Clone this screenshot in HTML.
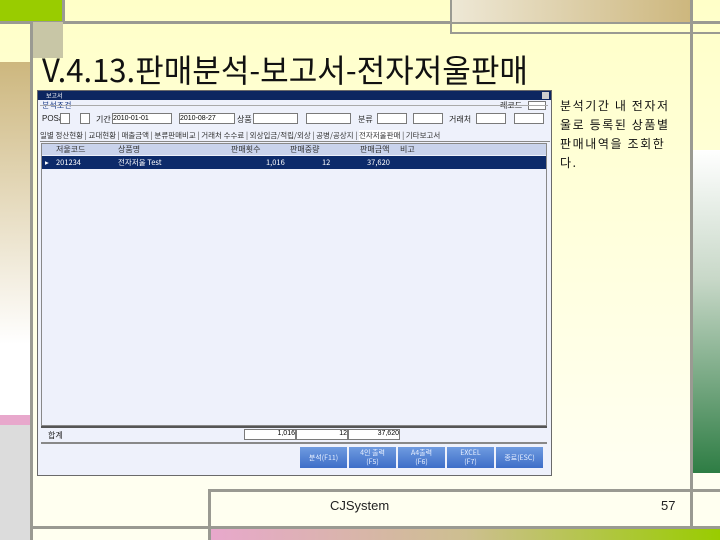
<!DOCTYPE html>
<html><head><meta charset="utf-8"><style>
*{margin:0;padding:0;box-sizing:border-box}
body{width:720px;height:540px;position:relative;overflow:hidden;background:linear-gradient(#ffffc8,#fffff0 85%);font-family:"Liberation Sans","Noto Sans CJK KR",sans-serif}
.a{position:absolute}
.k{font-family:"Noto Sans CJK KR","Liberation Sans",sans-serif}
.w{font-size:8px;color:#222}
.inp{position:absolute;background:#fff;border:1px solid #7a7a7a;height:11px}
.btn{position:absolute;top:447px;width:47px;height:21px;background:linear-gradient(#6f9be0,#3d6ec8);color:#e8f0ff;font-size:7px;text-align:center;line-height:9px;padding-top:2px}
</style></head><body>
<div class="a" style="left:0;top:0;width:62px;height:22px;background:#99cc00"></div>
<div class="a" style="left:62px;top:0;width:3px;height:22px;background:#9a9a92"></div>
<div class="a" style="left:0;top:21px;width:720px;height:3px;background:#9a9a92"></div>
<div class="a" style="left:33px;top:22px;width:30px;height:36px;background:#c8c6a6"></div>
<div class="a" style="left:0;top:62px;width:30px;height:353px;background:linear-gradient(#cdb77e,#fff 80%)"></div>
<div class="a" style="left:0;top:415px;width:30px;height:10px;background:#e8a8cc"></div>
<div class="a" style="left:0;top:425px;width:30px;height:115px;background:#dcdcdc"></div>
<div class="a" style="left:30px;top:22px;width:3px;height:518px;background:#9a9a92"></div>
<div class="a" style="left:450px;top:0;width:240px;height:22px;background:linear-gradient(90deg,#eee8d6,#cdb77e)"></div>
<div class="a" style="left:450px;top:0;width:2px;height:34px;background:#9a9a92"></div>
<div class="a" style="left:450px;top:32px;width:270px;height:2px;background:#9a9a92"></div>
<div class="a" style="left:690px;top:0;width:3px;height:540px;background:#9a9a92"></div>
<div class="a" style="left:693px;top:150px;width:27px;height:323px;background:linear-gradient(#fff,#c8d8c8 40%,#2e7d44)"></div>
<div class="a" style="left:208px;top:489px;width:512px;height:3px;background:#9a9a92"></div>
<div class="a" style="left:208px;top:489px;width:3px;height:51px;background:#9a9a92"></div>
<div class="a" style="left:33px;top:526px;width:687px;height:3px;background:#9a9a92"></div>
<div class="a" style="left:211px;top:529px;width:509px;height:11px;background:linear-gradient(90deg,#e8a8cc,#cdbf90 50%,#99cc00)"></div>
<div class="a k" style="left:42px;top:47px;font-size:32px;line-height:44px;color:#111;white-space:nowrap;transform:scaleX(0.97);transform-origin:0 0">V.4.13.판매분석-보고서-전자저울판매</div>
<div class="a k" style="left:560px;top:96px;font-size:12px;line-height:19px;color:#111;white-space:nowrap;letter-spacing:1.6px">분석기간 내 전자저<br>울로 등록된 상품별<br>판매내역을 조회한<br>다.</div>
<div class="a" style="left:37px;top:90px;width:515px;height:386px;background:#eef1fb;border:1px solid #6a6a6a">
 <div class="a k" style="left:0;top:0;width:513px;height:9px;background:#0c2660;color:#fff;font-size:6px;line-height:9px;padding-left:8px">보고서</div>
 <div class="a" style="right:2px;top:1px;width:7px;height:7px;background:#ccc"></div>
 <div class="a k w" style="left:4px;top:9px;color:#20408a">분석조건</div>
 <div class="a k w" style="left:462px;top:9px">레코드</div><div class="inp" style="left:490px;top:10px;width:18px;height:9px"></div>
 <div class="a" style="left:2px;top:14px;width:508px;height:1px;background:#aaa"></div>
 <div class="a w" style="left:4px;top:23px">POS#</div>
 <div class="inp" style="left:22px;top:22px;width:10px"></div><div class="inp" style="left:42px;top:22px;width:10px"></div>
 <div class="a k w" style="left:58px;top:23px">기간</div>
 <div class="inp" style="left:74px;top:22px;width:60px;font-size:7px;line-height:9px">2010-01-01</div>
 <div class="inp" style="left:141px;top:22px;width:56px;font-size:7px;line-height:9px">2010-08-27</div>
 <div class="a k w" style="left:199px;top:23px">상품</div>
 <div class="inp" style="left:215px;top:22px;width:45px"></div><div class="inp" style="left:268px;top:22px;width:45px"></div>
 <div class="a k w" style="left:320px;top:23px">분류</div>
 <div class="inp" style="left:339px;top:22px;width:30px"></div><div class="inp" style="left:375px;top:22px;width:30px"></div>
 <div class="a k w" style="left:411px;top:23px">거래처</div>
 <div class="inp" style="left:438px;top:22px;width:30px"></div><div class="inp" style="left:476px;top:22px;width:30px"></div>
 <div class="a k" style="left:2px;top:38px;width:510px;height:13px;font-size:7.5px;line-height:13px;color:#333;white-space:nowrap;overflow:hidden;border-bottom:1px solid #888">일별 정산현황 | 교대현황 | 매출금액 | 분류판매비교 | 거래처 수수료 | 외상입금/적립/외상 | 공병/공상지 | <span style="background:#fff">전자저울판매</span> | 기타보고서</div>
 <div class="a" style="left:3px;top:52px;width:506px;height:283px;background:#eef1fb;border:1px solid #888"></div>
 <div class="a k w" style="left:4px;top:53px;width:504px;height:11px;background:#c9d3ec;line-height:11px;color:#333">
  <span class="a" style="left:14px">저울코드</span><span class="a" style="left:76px">상품명</span><span class="a" style="left:189px">판매횟수</span><span class="a" style="left:248px">판매중량</span><span class="a" style="left:318px">판매금액</span><span class="a" style="left:358px">비고</span></div>
 <div class="a k" style="left:4px;top:65px;width:504px;height:13px;background:#0c2a6a;color:#fff;font-size:7.5px;line-height:13px">
  <span class="a" style="left:3px">▸</span><span class="a" style="left:14px">201234</span><span class="a" style="left:76px">전자저울 Test</span><span class="a" style="left:224px">1,016</span><span class="a" style="left:280px">12</span><span class="a" style="left:325px">37,620</span></div>
 <div class="a" style="left:3px;top:335px;width:506px;height:2px;background:#555"></div>
 <div class="a k w" style="left:10px;top:339px">합계</div>
 <div class="inp" style="left:206px;top:338px;width:52px;font-size:7px;text-align:right">1,016</div>
 <div class="inp" style="left:258px;top:338px;width:52px;font-size:7px;text-align:right">12</div>
 <div class="inp" style="left:310px;top:338px;width:52px;font-size:7px;text-align:right">37,620</div>
 <div class="a" style="left:3px;top:351px;width:506px;height:2px;background:#888"></div>
</div>
<div class="btn k" style="left:300px;line-height:19px">분석(F11)</div>
<div class="btn k" style="left:349px">4인 출력<br>(F5)</div>
<div class="btn k" style="left:398px">A4출력<br>(F6)</div>
<div class="btn k" style="left:447px">EXCEL<br>(F7)</div>
<div class="btn k" style="left:496px;line-height:19px">종료(ESC)</div>
<div class="a" style="left:330px;top:498px;font-size:13px;color:#222">CJSystem</div>
<div class="a" style="left:661px;top:498px;font-size:13px;color:#222">57</div>
</body></html>
